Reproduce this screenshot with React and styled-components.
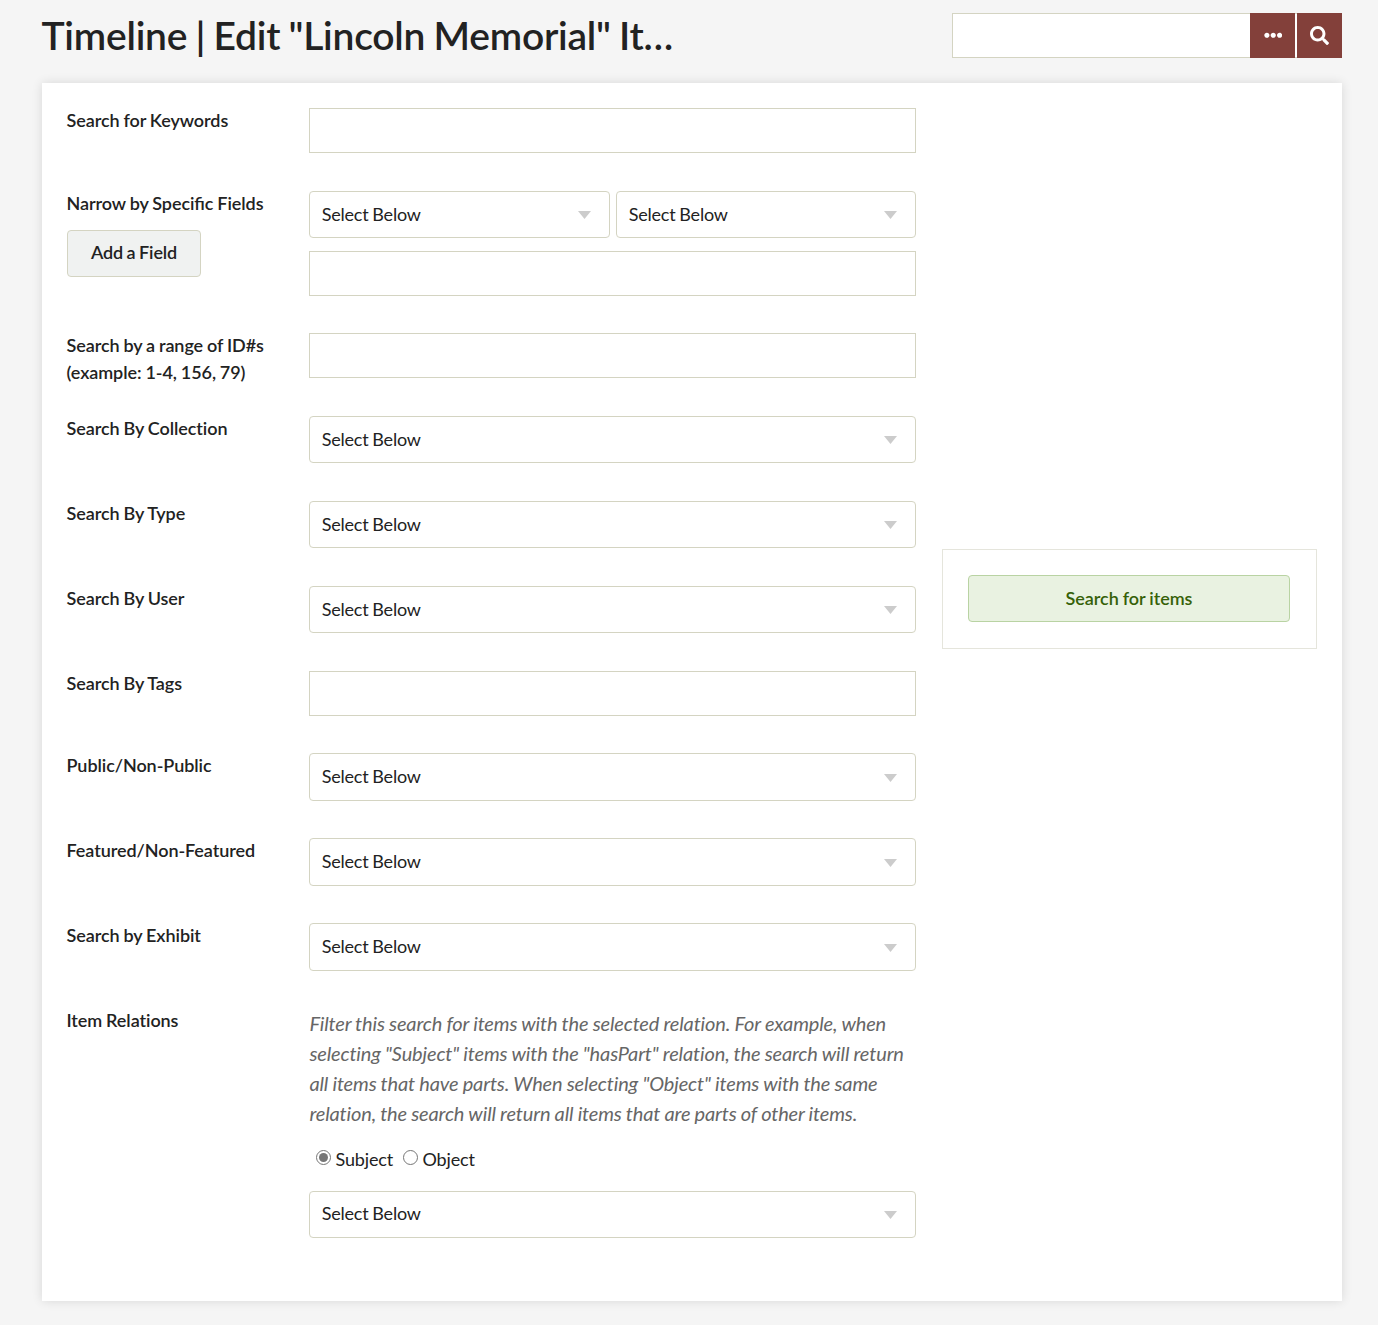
import React, { useState } from "react";
import styled, { createGlobalStyle } from "styled-components";
import { FaSearch, FaEllipsisH } from "react-icons/fa";

const GlobalStyle = createGlobalStyle`
  *, *::before, *::after { box-sizing: border-box; }
  body {
    margin: 0;
    background: #f5f5f5;
    color: #222;
    font-family: Lato, "Open Sans", sans-serif;
    font-size: 18px;
    line-height: 27px;
  }
  button, input { font: inherit; color: inherit; }
`;

const Page = styled.div`
  min-height: 1325px;
  padding: 13px 36px 24px 42px;
`;

const Header = styled.header`
  display: flex;
  justify-content: space-between;
  height: 70px;
`;

const Title = styled.h1`
  width: 640px;
  margin: -1px 0 0 -0.5px;
  font-size: 39px;
  line-height: 46px;
  font-weight: 600;
  letter-spacing: -0.23px;
  word-spacing: -1.2px;
  white-space: nowrap;
`;

const SiteSearch = styled.form`
  display: flex;
  width: 390px;
  height: 45px;
  background: #fff;
  border: 1px solid #d4d4c2;
  border-right: 0;
`;

const SiteSearchInput = styled.input`
  flex: 1;
  min-width: 0;
  border: 0;
  outline: 0;
  background: transparent;
`;

const SiteSearchButton = styled.button`
  display: flex;
  align-items: center;
  justify-content: center;
  width: 45px;
  height: 45px;
  margin: -1px 0 0 ${(p) => (p.$spaced ? "2px" : "0")};
  padding: ${(p) => (p.$spaced ? "0" : "0 0 1px 1px")};
  border: 0;
  background: #83403a;
  color: #fff;
`;

const Card = styled.main`
  display: grid;
  grid-template-columns: 849px 375px;
  column-gap: 26px;
  height: 1218px;
  padding: 25px;
  background: #fff;
  box-shadow: 0 0 10px rgba(0, 0, 0, 0.12);
`;

const Fields = styled.form`
  display: flex;
  flex-direction: column;
`;

const Field = styled.div`
  display: grid;
  grid-template-columns: 242px 607px;
  height: ${(p) => p.$height}px;
  align-items: start;
`;

const Label = styled.label`
  display: block;
  width: 215px;
  margin: -1px 0 0 -0.5px;
  font-weight: 600;
  letter-spacing: -0.07px;
  word-spacing: -0.5px;
  font-feature-settings: ${(p) => (p.$ligatures ? '"liga" 1' : "normal")};
`;

const TextInput = styled.input`
  display: block;
  width: 100%;
  height: 45px;
  padding: 0 12px;
  border: 1px solid #d4d4c2;
  border-radius: 0;
  background: #fff;
  outline: 0;
`;

const SelectBox = styled.button`
  display: flex;
  align-items: center;
  justify-content: space-between;
  width: 100%;
  height: ${(p) => (p.$tall ? 48 : 47)}px;
  padding: 0 18px 0 11.7px;
  border: 1px solid #d4d4c2;
  border-radius: 4px;
  background: #fff;
  line-height: 27px;
  letter-spacing: -0.2px;
  word-spacing: -0.6px;
  text-align: left;
`;

const SelectText = styled.span`
  padding-bottom: ${(p) => (p.$raised ? "2px" : "0")};
`;

const Caret = styled.svg`
  display: block;
  width: 13px;
  height: 8px;
  margin-top: 1px;
  fill: #ccc;
`;

const Pair = styled.div`
  display: grid;
  grid-template-columns: 301px 300px;
  column-gap: 6px;
  margin-bottom: 13px;
`;

const AddButton = styled.button`
  width: 134px;
  height: 47px;
  margin-top: 13px;
  padding: 0 0 2px;
  border: 1px solid #d4d4c2;
  border-radius: 4px;
  background: #f0f2f1;
  font-weight: 600;
  letter-spacing: -0.12px;
  word-spacing: -0.8px;
`;

const Explanation = styled.p`
  margin: 0 0 0 0.4px;
  color: #666;
  font-size: 20px;
  line-height: 30px;
  font-style: italic;
  letter-spacing: -0.14px;
  word-spacing: -0.3px;
`;

const Choices = styled.div`
  display: flex;
  gap: 10px;
  margin: 18px 0 18px 7px;
  letter-spacing: -0.15px;
`;

const Choice = styled.label`
  display: flex;
  gap: 4.5px;
`;

const Radio = styled.input`
  appearance: none;
  width: 15px;
  height: 15px;
  margin: 4px 0 0;
  padding: 2px;
  border: 1px solid #767676;
  border-radius: 50%;
  background: #fff;
  &:checked { background: #767676 content-box; }
`;

const Actions = styled.aside`
  height: 100px;
  margin-top: 441px;
  padding: 25px 26px 0 25px;
  border: 1px solid #e5e5dc;
`;

const SubmitButton = styled.button`
  display: block;
  width: 100%;
  height: 47px;
  padding: 0;
  border: 1px solid #b9d3a3;
  border-radius: 4px;
  background: #e9f2e1;
  color: #366108;
  font-weight: 600;
  letter-spacing: -0.05px;
  word-spacing: -0.4px;
`;

function Select({ tall, raised }) {
  return (
    <SelectBox type="button" $tall={tall}>
      <SelectText $raised={raised}>Select Below</SelectText>
      <Caret viewBox="0 0 13 8"><path d="M0 0h13L6.5 8z" /></Caret>
    </SelectBox>
  );
}

const upperFields = ["Search By Collection", "Search By Type", "Search By User"];
const lowerFields = ["Public/Non-Public", "Featured/Non-Featured", "Search by Exhibit"];

export default function App() {
  const [role, setRole] = useState("subject");
  return (
    <Page>
      <GlobalStyle />
      <Header>
        <Title>Timeline | Edit "Lincoln Memorial" It…</Title>
        <SiteSearch>
          <SiteSearchInput aria-label="Search" />
          <SiteSearchButton type="button" aria-label="Options"><FaEllipsisH size={18.5} /></SiteSearchButton>
          <SiteSearchButton type="button" aria-label="Submit" $spaced><FaSearch size={19} /></SiteSearchButton>
        </SiteSearch>
      </Header>
      <Card>
        <Fields>
          <Field $height={83}><Label>Search for Keywords</Label><TextInput /></Field>
          <Field $height={142}>
            <div>
              <Label $ligatures>Narrow by Specific Fields</Label>
              <AddButton type="button">Add a Field</AddButton>
            </div>
            <div>
              <Pair><Select /><Select /></Pair>
              <TextInput />
            </div>
          </Field>
          <Field $height={83}>
            <Label>Search by a range of ID#s (example: 1-4, 156, 79)</Label>
            <TextInput />
          </Field>
          {upperFields.map((label) => (
            <Field key={label} $height={85}><Label>{label}</Label><Select /></Field>
          ))}
          <Field $height={82}><Label>Search By Tags</Label><TextInput /></Field>
          {lowerFields.map((label) => (
            <Field key={label} $height={85}><Label>{label}</Label><Select tall raised /></Field>
          ))}
          <Field $height={240}>
            <Label>Item Relations</Label>
            <div>
              <Explanation>
                Filter this search for items with the selected relation. For example, when selecting "Subject" items
                with the "hasPart" relation, the search will return all items that have parts. When selecting "Object"
                items with the same relation, the search will return all items that are parts of other items.
              </Explanation>
              <Choices>
                <Choice><Radio type="radio" name="role" checked={role === "subject"} onChange={() => setRole("subject")} />Subject</Choice>
                <Choice><Radio type="radio" name="role" checked={role === "object"} onChange={() => setRole("object")} />Object</Choice>
              </Choices>
              <Select raised />
            </div>
          </Field>
        </Fields>
        <Actions><SubmitButton type="button">Search for items</SubmitButton></Actions>
      </Card>
    </Page>
  );
}
